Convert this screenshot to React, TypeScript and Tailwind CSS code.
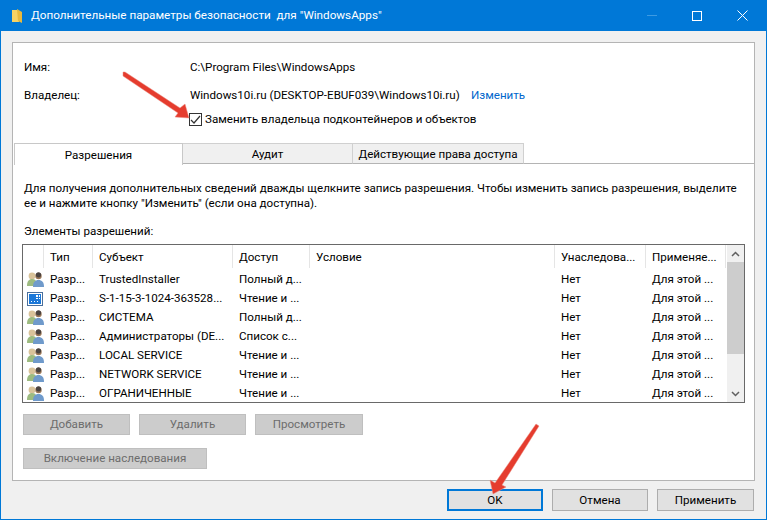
import { ReactNode } from "react"

const rows = [
    { kind: "user", subject: "TrustedInstaller", access: "Полный д..." },
    { kind: "app", subject: "S-1-15-3-1024-363528...", access: "Чтение и ..." },
    { kind: "user", subject: "СИСТЕМА", access: "Полный д..." },
    { kind: "user", subject: "Администраторы (DE...", access: "Список с..." },
    { kind: "user", subject: "LOCAL SERVICE", access: "Чтение и ..." },
    { kind: "user", subject: "NETWORK SERVICE", access: "Чтение и ..." },
    { kind: "user", subject: "ОГРАНИЧЕННЫЕ", access: "Чтение и ..." },
]

function UsersIcon() {
    return (
        <svg width="17" height="15" viewBox="0 0 17 15" className="shrink-0">
            <circle cx="5" cy="4" r="3.4" fill="#d9c39a" />
            <path d="M0 14c0-5 2-7 5-7s4 1 4 3v4z" fill="#9dbb80" />
            <circle cx="11.5" cy="4" r="3.2" fill="#9a7656" />
            <circle cx="11.5" cy="2.8" r="2.6" fill="#4a4340" />
            <path d="M6 15c0-5 2-7 5.5-7S17 10 17 15z" fill="#6f9acb" />
        </svg>
    )
}

function AppIcon() {
    return (
        <svg width="16" height="14" viewBox="0 0 16 14" className="shrink-0">
            <rect x="0.5" y="0.5" width="15" height="13" fill="#fff" stroke="#4a6f9c" />
            <rect x="2" y="2" width="12" height="10" fill="#1c78d8" />
            <path d="M9 3h2v2H9zM12 3h1v2h-1zM9 6h2v1H9zM12 6h1v1h-1zM4 9h1v1H4zM7 9h1v1H7zM10 9h1v1h-1z" fill="#fff" />
        </svg>
    )
}

function Arrow({ points, className }: { points: string; className: string }) {
    return (
        <svg viewBox="0 0 767 520" className={className}>
            <polygon points={points} fill="#e53c2e" stroke="#eb8d80" strokeWidth="0.5" />
        </svg>
    )
}

function GrayButton({ width, children }: { width: string; children: ReactNode }) {
    return (
        <div className={`${width} h-[21px] bg-[#cccccc] border border-[#bfbfbf] flex items-center justify-center text-[#6d6d6d]`}>
            {children}
        </div>
    )
}

function HeaderCell({ width, children }: { width: string; children?: ReactNode }) {
    return (
        <div className={`${width} shrink-0 h-[23px] border-r border-[#e5e5e5] pl-[6px] pt-[2px] flex items-center`}>
            {children}
        </div>
    )
}

export default function App() {
    return (
        <div
            className="relative w-[767px] h-[520px] overflow-hidden bg-[#f0f0f0] border-x border-b border-[#0078d7] text-[11.6px] text-black flex flex-col"
            style={{ fontFamily: 'Roboto, sans-serif' }}
        >
            <div className="h-[31px] shrink-0 bg-[#0078d7] flex items-center pl-[11px] text-white">
                <svg width="11" height="14" viewBox="0 0 11 14">
                    <path d="M0 1h5l2 2v10H0z" fill="#f6d365" />
                    <path d="M5 0l5 3v11l-4-2z" fill="#e8b93e" />
                </svg>
                <span className="ml-[8px] text-[11.7px]">Дополнительные параметры безопасности&nbsp; для "WindowsApps"</span>
                <div className="ml-auto flex items-center gap-[35px] pr-[18px]">
                    <div className="w-[10px] h-px bg-[#3d9be3]" />
                    <div className="w-[10px] h-[10px] border border-white" />
                    <svg width="11" height="11" viewBox="0 0 11 11">
                        <path d="M0.5 0.5l10 10M10.5 0.5l-10 10" stroke="white" fill="none" />
                    </svg>
                </div>
            </div>

            <div className="ml-[11px] mr-[11px] mt-[11px] h-[439px] shrink-0 bg-white border border-[#b4b4b4] flex flex-col">
                <div className="flex items-center h-[17px] mt-[16px] pl-[11px]">
                    <div className="w-[166px]">Имя:</div>
                    <div>C:\Program Files\WindowsApps</div>
                </div>
                <div className="flex items-center h-[17px] mt-[11px] pl-[11px]">
                    <div className="w-[166px]">Владелец:</div>
                    <div className="w-[281px] whitespace-nowrap">Windows10i.ru (DESKTOP-EBUF039\Windows10i.ru)</div>
                    <div className="text-[#0066cc]">Изменить</div>
                </div>
                <div className="flex items-center h-[17px] mt-[7px] pl-[176px]">
                    <div className="w-[13px] h-[13px] border border-[#333] flex items-center justify-center">
                        <svg width="11" height="11" viewBox="0 0 11 11">
                            <path d="M1 6l3 3 6-7" stroke="#333" strokeWidth="1.2" fill="none" />
                        </svg>
                    </div>
                    <span className="ml-[3px]">Заменить владельца подконтейнеров и объектов</span>
                </div>

                <div className="flex h-[21px] mt-[15px] pl-px">
                    <div className="w-[169px] h-[22px] pt-[2px] z-10 bg-white border-t border-r border-l border-[#c8c8c8] flex items-center justify-center">Разрешения</div>
                    <div className="w-[170px] pt-[2px] bg-[#f0f0f0] border-t border-r border-b border-[#d0d0d0] border-b-[#b4b4b4] flex items-center justify-center">Аудит</div>
                    <div className="w-[171px] pt-[2px] bg-[#f0f0f0] border-t border-r border-b border-[#d0d0d0] border-b-[#b4b4b4] flex items-center justify-center">Действующие права доступа</div>
                    <div className="flex-1 border-b border-[#b4b4b4]" />
                </div>

                <div className="mt-[17px] pl-[11px] leading-[15px] whitespace-nowrap">
                    Для получения дополнительных сведений дважды щелкните запись разрешения. Чтобы изменить запись разрешения, выделите<br />
                    ее и нажмите кнопку "Изменить" (если она доступна).
                </div>
                <div className="mt-[12px] pl-[11px] leading-[16px]">Элементы разрешений:</div>

                <div className="mt-[5px] ml-[9px] w-[723px] h-[159px] border border-[#696969] flex overflow-hidden">
                    <div className="w-[704px] shrink-0 flex flex-col">
                        <div className="flex h-[25px] shrink-0">
                            <HeaderCell width="w-[21px]" />
                            <HeaderCell width="w-[49px]">Тип</HeaderCell>
                            <HeaderCell width="w-[140px]">Субъект</HeaderCell>
                            <HeaderCell width="w-[77px]">Доступ</HeaderCell>
                            <HeaderCell width="w-[245px]">Условие</HeaderCell>
                            <HeaderCell width="w-[91px]">Унаследова...</HeaderCell>
                            <HeaderCell width="w-[80px]">Применяе...</HeaderCell>
                        </div>
                        {rows.map((row, i) => (
                            <div className="flex items-center h-[19px] shrink-0" key={i}>
                                <div className="w-[27px] pl-[4px] shrink-0">{row.kind === "user" ? <UsersIcon /> : <AppIcon />}</div>
                                <div className="w-[49px] shrink-0">Разр...</div>
                                <div className="w-[140px] shrink-0 whitespace-nowrap">{row.subject}</div>
                                <div className="w-[322px] shrink-0">{row.access}</div>
                                <div className="w-[91px] shrink-0">Нет</div>
                                <div className="shrink-0">Для этой ...</div>
                            </div>
                        ))}
                    </div>
                    <div className="w-[17px] shrink-0 bg-[#f0f0f0] flex flex-col">
                        <div className="h-[17px] flex items-center justify-center">
                            <svg width="9" height="6" viewBox="0 0 9 6"><path d="M1 5l3.5-3.5L8 5" stroke="#606060" strokeWidth="1.5" fill="none" /></svg>
                        </div>
                        <div className="h-[92px] bg-[#cdcdcd]" />
                        <div className="mt-auto h-[17px] flex items-center justify-center">
                            <svg width="9" height="6" viewBox="0 0 9 6"><path d="M1 1l3.5 3.5L8 1" stroke="#606060" strokeWidth="1.5" fill="none" /></svg>
                        </div>
                    </div>
                </div>

                <div className="flex gap-[9px] mt-[11px] ml-[10px]">
                    <GrayButton width="w-[107px]">Добавить</GrayButton>
                    <GrayButton width="w-[107px]">Удалить</GrayButton>
                    <GrayButton width="w-[108px]">Просмотреть</GrayButton>
                </div>
                <div className="mt-[13px] ml-[10px]">
                    <GrayButton width="w-[184px]">Включение наследования</GrayButton>
                </div>
            </div>

            <div className="flex justify-end gap-[9px] mt-[8px] mr-[12px]">
                <div className="w-[96px] h-[22px] pt-[2px] bg-[#e1e1e1] border-2 border-[#0078d7] flex items-center justify-center">OK</div>
                <div className="w-[96px] h-[22px] pt-[2px] bg-[#e1e1e1] border border-[#adadad] flex items-center justify-center">Отмена</div>
                <div className="w-[97px] h-[22px] pt-[2px] bg-[#e1e1e1] border border-[#adadad] flex items-center justify-center">Применить</div>
            </div>

            <Arrow className="absolute -left-px top-0 w-[767px] h-[520px] pointer-events-none" points="123,72 125,72 180,108 185,104 189,118 175,117 178,113 123,76" />
            <Arrow className="absolute -left-px top-0 w-[767px] h-[520px] pointer-events-none" points="536,424 539,426 502,485 506,487 493,494 490,480 495,483" />
        </div>
    )
}
